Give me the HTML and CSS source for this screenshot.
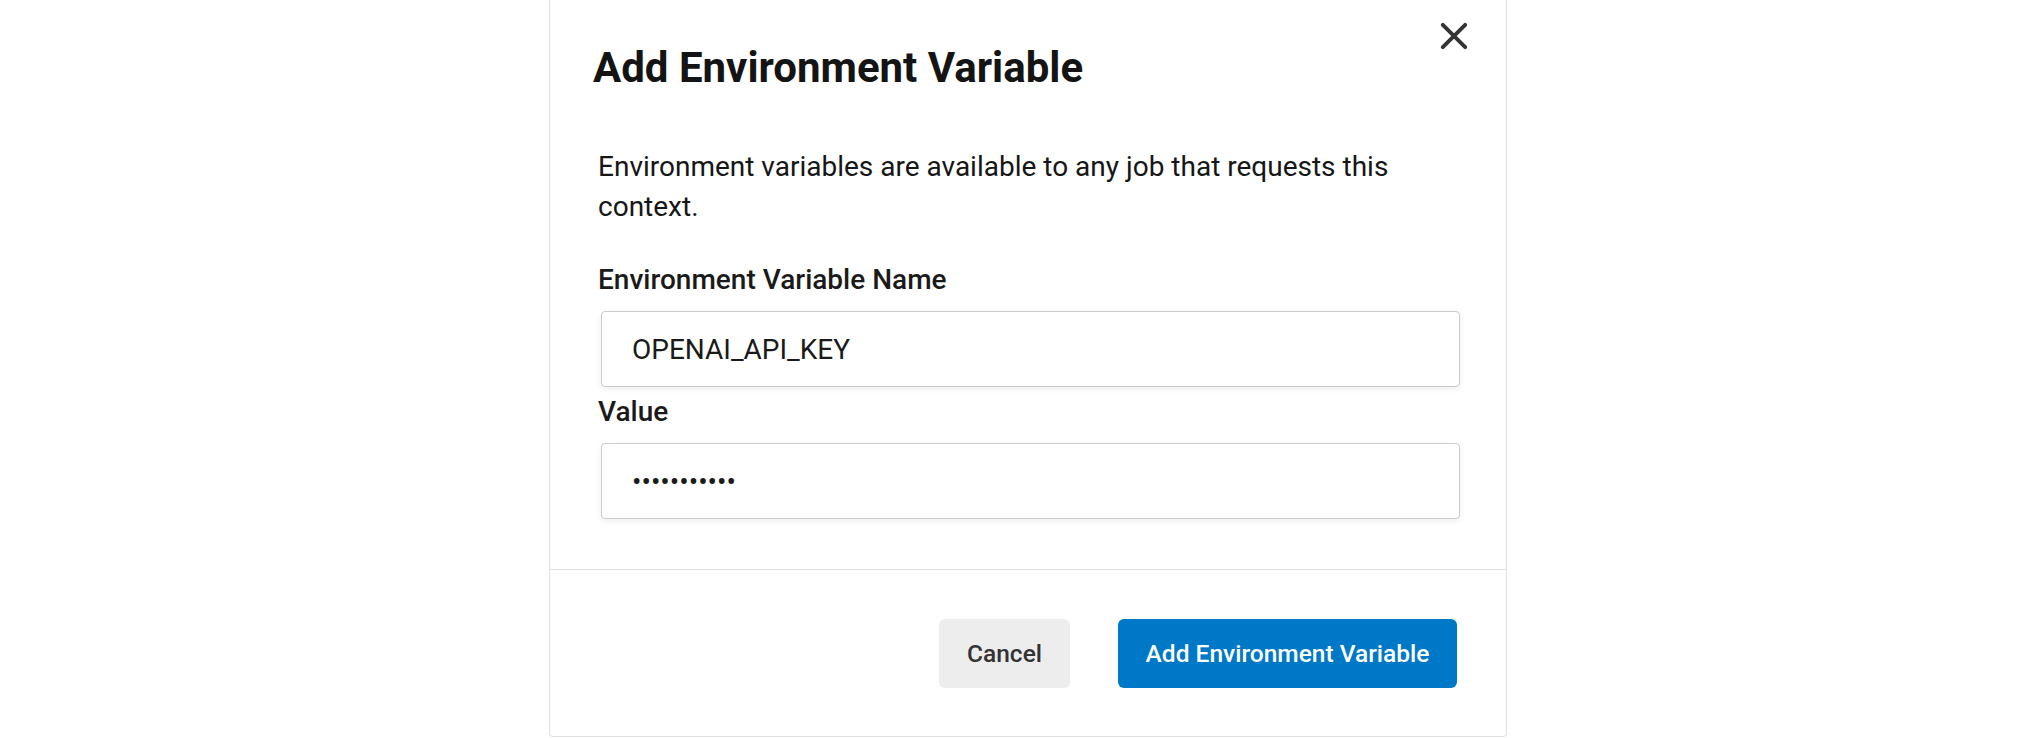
FILE: index.html
```html
<!DOCTYPE html>
<html lang="en">
<head>
<meta charset="utf-8">
<title>Add Environment Variable</title>
<link rel="stylesheet" href="styles.css">
</head>
<body>
<div class="modal" role="dialog" aria-labelledby="dlg-title">
  <div class="modal-header">
    <h2 class="modal-title" id="dlg-title">Add Environment Variable</h2>
    <button class="close-btn" aria-label="Close">
      <svg width="28" height="28" viewBox="0 0 28 28" aria-hidden="true">
        <path d="M2.8 2.8 L25.2 25.2 M25.2 2.8 L2.8 25.2" stroke="#333333" stroke-width="3.9" stroke-linecap="round" fill="none"/>
      </svg>
    </button>
  </div>
  <div class="modal-body">
    <p class="intro">Environment variables are available to any job that requests this context.</p>
    <label class="field-label" for="env-name">Environment Variable Name</label>
    <input class="field-input" id="env-name" type="text" value="OPENAI_API_KEY">
    <label class="field-label" for="env-value">Value</label>
    <input class="field-input" id="env-value" type="password" value="sk-abcdefgh">
  </div>
  <div class="modal-footer">
    <button class="btn btn-secondary">Cancel</button>
    <button class="btn btn-primary">Add Environment Variable</button>
  </div>
</div>
</body>
</html>
```
FILE: styles.css
```css
* { box-sizing: border-box; }
html, body { margin: 0; padding: 0; background: #ffffff; }
body {
  font-family: Roboto, "Liberation Sans", Arial, sans-serif;
  color: #161616;
  height: 738px;
  overflow: hidden;
}
.modal {
  width: 958px;
  margin-left: 549px;
  background: #ffffff;
  border: 1px solid #e1e1e1;
  border-top: none;
  border-radius: 0 0 4px 4px;
  display: flex;
  flex-direction: column;
}
.modal-header {
  display: flex;
  justify-content: space-between;
  align-items: flex-start;
  padding: 22px 38px 0 43px;
}
.modal-title {
  margin: 22px 0 0 0;
  font-size: 42px;
  line-height: 48px;
  font-weight: 700;
  color: #141414;
}
.close-btn {
  width: 28px;
  height: 28px;
  padding: 0;
  border: none;
  background: transparent;
  display: flex;
  cursor: pointer;
}
.modal-body {
  display: flex;
  flex-direction: column;
  padding: 55px 46px 45px 48px;
  border-bottom: 1px solid #e1e1e1;
}
.intro {
  margin: 0 0 33px 0;
  font-size: 28px;
  line-height: 40px;
  font-weight: 400;
  max-width: 860px;
}
.field-label {
  font-size: 28px;
  line-height: 40px;
  font-weight: 500;
  color: #1a1a1a;
  margin-bottom: 11px;
}
.field-input {
  height: 76px;
  margin: 0 0 5px 3px;
  padding: 0 30px;
  border: 1px solid #cccccc;
  border-radius: 4px;
  box-shadow: 0 2px 6px rgba(0, 0, 0, 0.07);
  font-family: Roboto, "Liberation Sans", Arial, sans-serif;
  font-size: 28px;
  color: #1a1a1a;
  background: #ffffff;
  outline: none;
}
.modal-footer {
  display: flex;
  justify-content: flex-end;
  gap: 48px;
  padding: 49px 49px 48px 49px;
}
.btn {
  height: 69px;
  padding: 0;
  border: none;
  border-radius: 6px;
  font-family: Roboto, "Liberation Sans", Arial, sans-serif;
  font-size: 24.5px;
  font-weight: 500;
  white-space: nowrap;
  cursor: pointer;
}
.btn-secondary {
  background: #ededed;
  color: #333333;
  width: 131px;
}
.btn-primary {
  background: #0078c8;
  color: #ffffff;
  width: 339px;
}
```
